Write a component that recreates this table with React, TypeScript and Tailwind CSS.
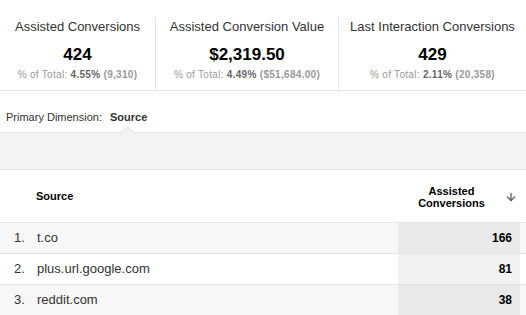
import { ArrowDown } from 'lucide-react'

const metrics = [
  { label: 'Assisted Conversions', value: '424', pct: '4.55%', total: '(9,310)', width: 'w-[155px]' },
  { label: 'Assisted Conversion Value', value: '$2,319.50', pct: '4.49%', total: '($51,684.00)', width: 'w-[183px]' },
  { label: 'Last Interaction Conversions', value: '429', pct: '2.11%', total: '(20,358)', width: 'flex-1' },
]

const rows = [
  { n: '1.', source: 't.co', value: '166' },
  { n: '2.', source: 'plus.url.google.com', value: '81' },
  { n: '3.', source: 'reddit.com', value: '38' },
]

export default function App() {
  return (
    <div className="w-[526px] h-[315px] overflow-hidden bg-white text-[#333] font-['Liberation_Sans',Arial,sans-serif]">
      {/* Scorecards */}
      <div className="flex h-[91px] pt-[17px] border-b border-[#e5e5e5]">
        {metrics.map((m, i) => (
          <div
            key={m.label}
            className={`${m.width} flex flex-col items-center ${i > 0 ? 'border-l border-[#e3e3e3]' : ''}`}
          >
            <div className="text-[13px] leading-[16px] text-[#333] mt-[2px]">{m.label}</div>
            <div className="text-[17px] leading-[20px] font-bold text-black mt-[10px]">{m.value}</div>
            <div className="text-[10px] leading-[12px] text-[#999] mt-[4px] tracking-[0.3px]">
              % of Total: <span className="font-bold text-[#666]">{m.pct}</span>{' '}
              <span className="font-bold">{m.total}</span>
            </div>
          </div>
        ))}
      </div>

      {/* Primary dimension */}
      <div className="h-[41px] flex items-center pl-[6px] pt-[12px] text-[11px]">
        <span className="text-[#333]">Primary Dimension:</span>
        <span className="ml-[8px] font-bold text-[#333]">Source</span>
      </div>

      {/* Toolbar */}
      <div className="relative h-[38px] bg-[#f3f3f3] border-t border-b border-[#e3e3e3]">
        <div className="absolute left-[123px] -top-[5px] w-[9px] h-[9px] rotate-45 bg-[#f3f3f3] border-t border-l border-[#e3e3e3]" />
      </div>

      {/* Header */}
      <div className="flex h-[53px] items-center border-b border-[#e5e5e5] text-[11px] font-bold text-black">
        <div className="pl-[36px] flex-1">Source</div>
        <div className="w-[107px] text-center leading-[12px] pt-[1px]">
          Assisted
          <br />
          Conversions
        </div>
        <div className="w-[21px] flex justify-start pt-[2px]">
          <ArrowDown className="w-[12px] h-[12px] text-[#666]" strokeWidth={2.75} />
        </div>
      </div>

      {/* Rows */}
      {rows.map((r, i) => (
        <div
          key={r.n}
          className={`flex h-[31px] border-b border-[#e5e5e5] text-[13px] ${i % 2 === 0 ? 'bg-[#f7f7f7]' : 'bg-white'}`}
        >
          <div className="w-[37px] pl-[14px] flex items-center">{r.n}</div>
          <div className="flex-1 flex items-center">{r.source}</div>
          <div
            className={`w-[122px] flex items-center justify-end pr-[8px] text-[12px] font-bold text-black ${
              i % 2 === 0 ? 'bg-[#e9e9e9]' : 'bg-[#f1f1f1]'
            }`}
          >
            {r.value}
          </div>
          <div className="w-[6px]" />
        </div>
      ))}
    </div>
  )
}
